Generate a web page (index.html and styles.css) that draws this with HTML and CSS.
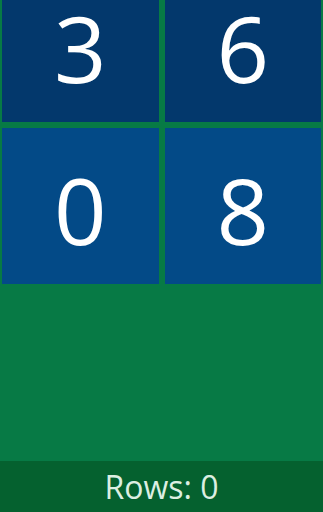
FILE: index.html
```html
<!DOCTYPE html>
<html>
<head>
<meta charset="utf-8">
<link rel="stylesheet" href="styles.css">
</head>
<body>
<div class="app">
  <div class="board">
    <div class="grid">
      <div class="tile row-a">3</div>
      <div class="tile row-a">6</div>
      <div class="tile row-b">0</div>
      <div class="tile row-b">8</div>
    </div>
  </div>
  <div class="status">Rows: 0</div>
</div>
</body>
</html>
```
FILE: styles.css
```css
html, body {
  margin: 0;
  padding: 0;
}
body {
  background: #077a45;
  font-family: "Open Sans", "Noto Sans", sans-serif;
  overflow: hidden;
}
.app {
  display: flex;
  flex-direction: column;
  width: 323px;
  height: 512px;
}
.board {
  flex: 1;
  overflow: hidden;
  padding: 0 2px;
}
.grid {
  display: grid;
  grid-template-columns: 1fr 1fr;
  grid-template-rows: 122px 156px;
  gap: 6px;
}
.tile {
  display: flex;
  align-items: center;
  justify-content: center;
  box-sizing: border-box;
  color: #ffffff;
  font-size: 92px;
  line-height: 1;
}
.row-a {
  background: #03386c;
  padding-bottom: 27px;
}
.row-b {
  background: #034a87;
  padding-top: 7px;
}
.status {
  height: 51px;
  background: #05612f;
  color: #dcefe2;
  font-size: 32px;
  display: flex;
  align-items: center;
  justify-content: center;
}
```
